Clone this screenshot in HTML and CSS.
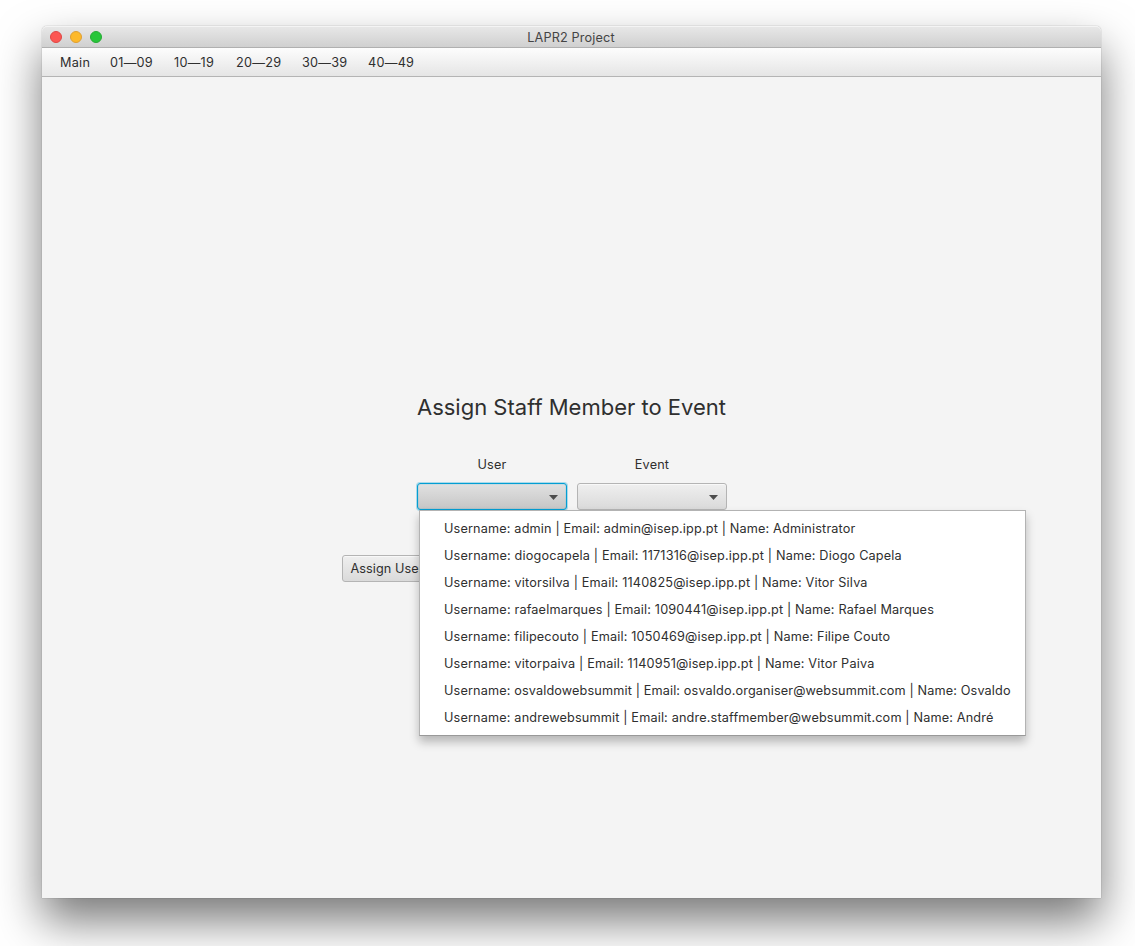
FILE: index.html
```html
<!DOCTYPE html>
<html lang="en">
<head>
<meta charset="utf-8">
<title>LAPR2 Project</title>
<link rel="stylesheet" href="styles.css">
</head>
<body>
<div class="window">
  <header class="titlebar">
    <div class="lights"><span class="light close"></span><span class="light minimize"></span><span class="light zoom"></span></div>
    <div class="title">LAPR2 Project</div>
  </header>
  <nav class="menubar">
    <span class="m-main">Main</span>
    <span class="m-01">01—09</span>
    <span class="m-10">10—19</span>
    <span class="m-20">20—29</span>
    <span class="m-30">30—39</span>
    <span class="m-40">40—49</span>
  </nav>
  <main class="content">
    <h1>Assign Staff Member to Event</h1>
    <div class="fields">
      <div class="field">
        <label>User</label>
        <div class="combo focused">
          <svg class="arrow" width="9" height="5" viewBox="0 0 9 5"><path d="M0 0H9L4.5 5Z" fill="#4d4d4d"/></svg>
          <ul class="popup">
            <li class="r1">Username: admin | Email: admin@isep.ipp.pt | Name: Administrator</li>
            <li class="r2">Username: diogocapela | Email: 1171316@isep.ipp.pt | Name: Diogo Capela</li>
            <li class="r3">Username: vitorsilva | Email: 1140825@isep.ipp.pt | Name: Vitor Silva</li>
            <li class="r4">Username: rafaelmarques | Email: 1090441@isep.ipp.pt | Name: Rafael Marques</li>
            <li class="r5">Username: filipecouto | Email: 1050469@isep.ipp.pt | Name: Filipe Couto</li>
            <li class="r6">Username: vitorpaiva | Email: 1140951@isep.ipp.pt | Name: Vitor Paiva</li>
            <li class="r7">Username: osvaldowebsummit | Email: osvaldo.organiser@websummit.com | Name: Osvaldo</li>
            <li class="r8">Username: andrewebsummit | Email: andre.staffmember@websummit.com | Name: André</li>
          </ul>
        </div>
      </div>
      <div class="field">
        <label>Event</label>
        <div class="combo">
          <svg class="arrow" width="9" height="5" viewBox="0 0 9 5"><path d="M0 0H9L4.5 5Z" fill="#4d4d4d"/></svg>
        </div>
      </div>
    </div>
    <div class="actions"><button class="button">Assign User</button></div>
  </main>
</div>
</body>
</html>
```
FILE: styles.css
```css
* { box-sizing: border-box; }
body {
  margin: 0;
  padding: 26px 34px 48px 42px;
  height: 946px;
  overflow: hidden;
  background: #fff;
  font: 12.7px/16px Inter, "Liberation Sans", sans-serif;
  letter-spacing: .15px;
  color: #2f2f2f;
}
.window {
  width: 1059px;
  height: 872px;
  display: flex;
  flex-direction: column;
  background: #f4f4f4;
  border-radius: 5px 5px 0 0;
  box-shadow: 0 0 1px rgba(0,0,0,.55), 0 23px 46px rgba(0,0,0,.53);
}
.titlebar {
  height: 22px;
  display: grid;
  grid-template-columns: 100px 1fr 100px;
  align-items: center;
  background: linear-gradient(#e8e8e8, #d0d0d0);
  border-bottom: 1px solid #b0b0b0;
  border-radius: 5px 5px 0 0;
  box-shadow: inset 0 1px #f4f4f4;
}
.lights { display: flex; gap: 8px; padding-left: 8px; }
.light { width: 12px; height: 12px; border-radius: 50%; border: 1px solid; }
.close { background: #fc5753; border-color: #df4744; }
.minimize { background: #fdb92b; border-color: #de9f34; }
.zoom { background: #28c63a; border-color: #27aa35; }
.title { text-align: center; color: #444; padding: 2px 1px 0 0; }
.menubar {
  height: 29px;
  display: flex;
  padding: 7px 0 0 18px;
  background: linear-gradient(#fdfdfd, #e5e5e5);
  border-bottom: 1px solid #b4b4b4;
  letter-spacing: .25px;
}
.m-main { width: 50px; }
.m-01 { width: 64px; }
.m-10 { width: 62px; }
.m-20, .m-30 { width: 66px; }
.content {
  flex: 1;
  padding-top: 314px;
  display: flex;
  flex-direction: column;
  align-items: center;
}
h1 { margin: 0; font-size: 22px; font-weight: 400; line-height: 32px; letter-spacing: 0; white-space: nowrap; }
.fields { display: flex; gap: 10px; margin-top: 34px; padding-left: 1px; }
.field { width: 150px; display: flex; flex-direction: column; gap: 10px; }
.field label { text-align: center; height: 16px; }
.combo {
  position: relative;
  height: 27px;
  display: flex;
  align-items: center;
  justify-content: flex-end;
  padding: 1px 8px 0 0;
  background: linear-gradient(#efefef, #dadada);
  border: 1px solid #b4b4b4;
  border-radius: 3px;
  box-shadow: inset 0 1px #f8f8f8;
}
.focused {
  background: linear-gradient(#e1e1e1, #c6c6c6);
  border-color: #039ed3;
  box-shadow: 0 0 0 1px rgba(3,158,211,.3), inset 0 0 1px #039ed3;
}
.popup {
  position: absolute;
  z-index: 2;
  left: 1px;
  top: 26px;
  width: 607px;
  height: 226px;
  margin: 0;
  padding: 4px 0 0 24px;
  list-style: none;
  background: #fff;
  border: 1px solid #b3b3b3;
  border-bottom-color: #999;
  box-shadow: 0 6px 9px rgba(0,0,0,.25);
}
.popup li { height: 27px; line-height: 27px; white-space: nowrap; }
.popup .r2, .popup .r3, .popup .r6 { letter-spacing: .167px; }
.popup .r4 { letter-spacing: .158px; }
.popup .r7 { letter-spacing: .13px; }
.actions { width: 460px; margin-top: 45px; }
.button {
  width: 150px;
  height: 27px;
  padding: 0 0 0 8px;
  text-align: left;
  font: inherit;
  letter-spacing: .05px;
  color: inherit;
  background: linear-gradient(#efefef, #dadada);
  border: 1px solid #b4b4b4;
  border-radius: 3px;
  box-shadow: inset 0 1px #f8f8f8;
}
```
